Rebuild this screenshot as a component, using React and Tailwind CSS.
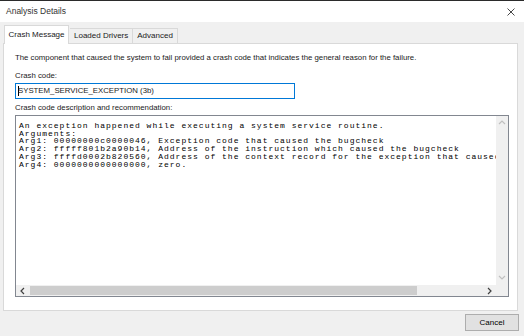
import React from 'react'

const lines = [
    'An exception happened while executing a system service routine.',
    'Arguments:',
    'Arg1: 00000000c0000046, Exception code that caused the bugcheck',
    'Arg2: fffff801b2a90b14, Address of the instruction which caused the bugcheck',
    'Arg3: ffffd0002b820560, Address of the context record for the exception that caused the bugcheck',
    'Arg4: 0000000000000000, zero.',
]

const Arrow = ({ dir }) => {
    const paths = {
        up: 'M1 5 L4 2 L7 5',
        down: 'M1 2 L4 5 L7 2',
        left: 'M5 1 L2 4 L5 7',
        right: 'M2 1 L5 4 L2 7',
    }
    const dark = dir === 'left' || dir === 'right'
    return (
        <svg width="8" height="8" viewBox="0 0 8 8">
            <path d={paths[dir]} fill="none" stroke={dark ? '#404040' : '#c0c0c0'} strokeWidth="1.2" />
        </svg>
    )
}

export default function App() {
    return (
        <div className="w-[524px] h-[336px] bg-[#f0f0f0] border-t border-[#2b2b2b] flex flex-col text-[#1a1a1a] overflow-hidden" style={{ fontFamily: '"Liberation Sans", Arial, sans-serif' }}>
            {/* title bar */}
            <div className="h-[21px] bg-white flex items-center justify-between pl-[6px] pr-[9px] shrink-0">
                <span className="text-[8.5px] text-[#333]">Analysis Details</span>
                <svg width="8" height="8" viewBox="0 0 8 8">
                    <path d="M0.5 0.5 L7.5 7.5 M7.5 0.5 L0.5 7.5" stroke="#333" strokeWidth="0.9" />
                </svg>
            </div>

            {/* tabs */}
            <div className="flex items-end pl-[4px] h-[21px] shrink-0">
                <div className="h-[19px] w-[65px] bg-white border border-b-0 border-[#d9d9d9] flex items-center justify-center text-[8px] relative top-[1px] z-10">
                    Crash Message
                </div>
                <div className="h-[15px] px-[4px] border-t border-r border-[#d9d9d9] flex items-center text-[8px] ml-[1px]">
                    Loaded Drivers
                </div>
                <div className="h-[15px] px-[4px] border-t border-r border-[#d9d9d9] flex items-center text-[8px]">
                    Advanced
                </div>
            </div>

            {/* tab panel */}
            <div className="ml-[3px] w-[515px] h-[268px] bg-white border border-[#d9d9d9] flex flex-col pl-[11px] shrink-0">
                <p className="text-[7.8px] leading-[10px] mt-[9px] whitespace-nowrap">
                    The component that caused the system to fail provided a crash code that indicates the general reason for the failure.
                </p>
                <p className="text-[7.8px] leading-[10px] mt-[8px]">Crash code:</p>
                <div className="mt-[2px] w-[280px] h-[16px] border border-[#0078d7] flex items-center pl-[2px] text-[7.8px]">
                    <span className="w-px h-[10px] bg-black -mr-px" />
                    SYSTEM_SERVICE_EXCEPTION (3b)
                </div>
                <p className="text-[7.8px] leading-[10px] mt-[4px]">Crash code description and recommendation:</p>

                {/* text box */}
                <div className="mt-[2px] w-[494px] h-[182px] border border-[#828790] flex flex-col">
                    <div className="flex flex-1 min-h-0">
                        <div className="flex-1 overflow-hidden pl-[3px] pt-[6px]">
                            <pre className="text-[8px] leading-[7.7px] tracking-[1px] text-black" style={{ fontFamily: '"Liberation Mono", "Courier New", monospace' }}>
                                {lines.join('\n')}
                            </pre>
                        </div>
                        <div className="w-[12px] bg-[#f0f0f0] flex flex-col items-center justify-between py-[3px]">
                            <Arrow dir="up" />
                            <Arrow dir="down" />
                        </div>
                    </div>
                    <div className="h-[11px] flex shrink-0">
                        <div className="flex-1 bg-[#f0f0f0] flex items-center">
                            <div className="w-[14px] flex justify-center"><Arrow dir="left" /></div>
                            <div className="w-[387px] h-[9px] bg-[#cdcdcd]" />
                            <div className="flex-1 flex justify-end pr-[2px]"><Arrow dir="right" /></div>
                        </div>
                        <div className="w-[12px] bg-[#f0f0f0]" />
                    </div>
                </div>
            </div>

            {/* footer */}
            <div className="flex justify-end pr-[5px] mt-[3px]">
                <button className="w-[54px] h-[17px] bg-[#e1e1e1] border border-[#adadad] text-[8px] text-black flex items-center justify-center">
                    Cancel
                </button>
            </div>
        </div>
    )
}
